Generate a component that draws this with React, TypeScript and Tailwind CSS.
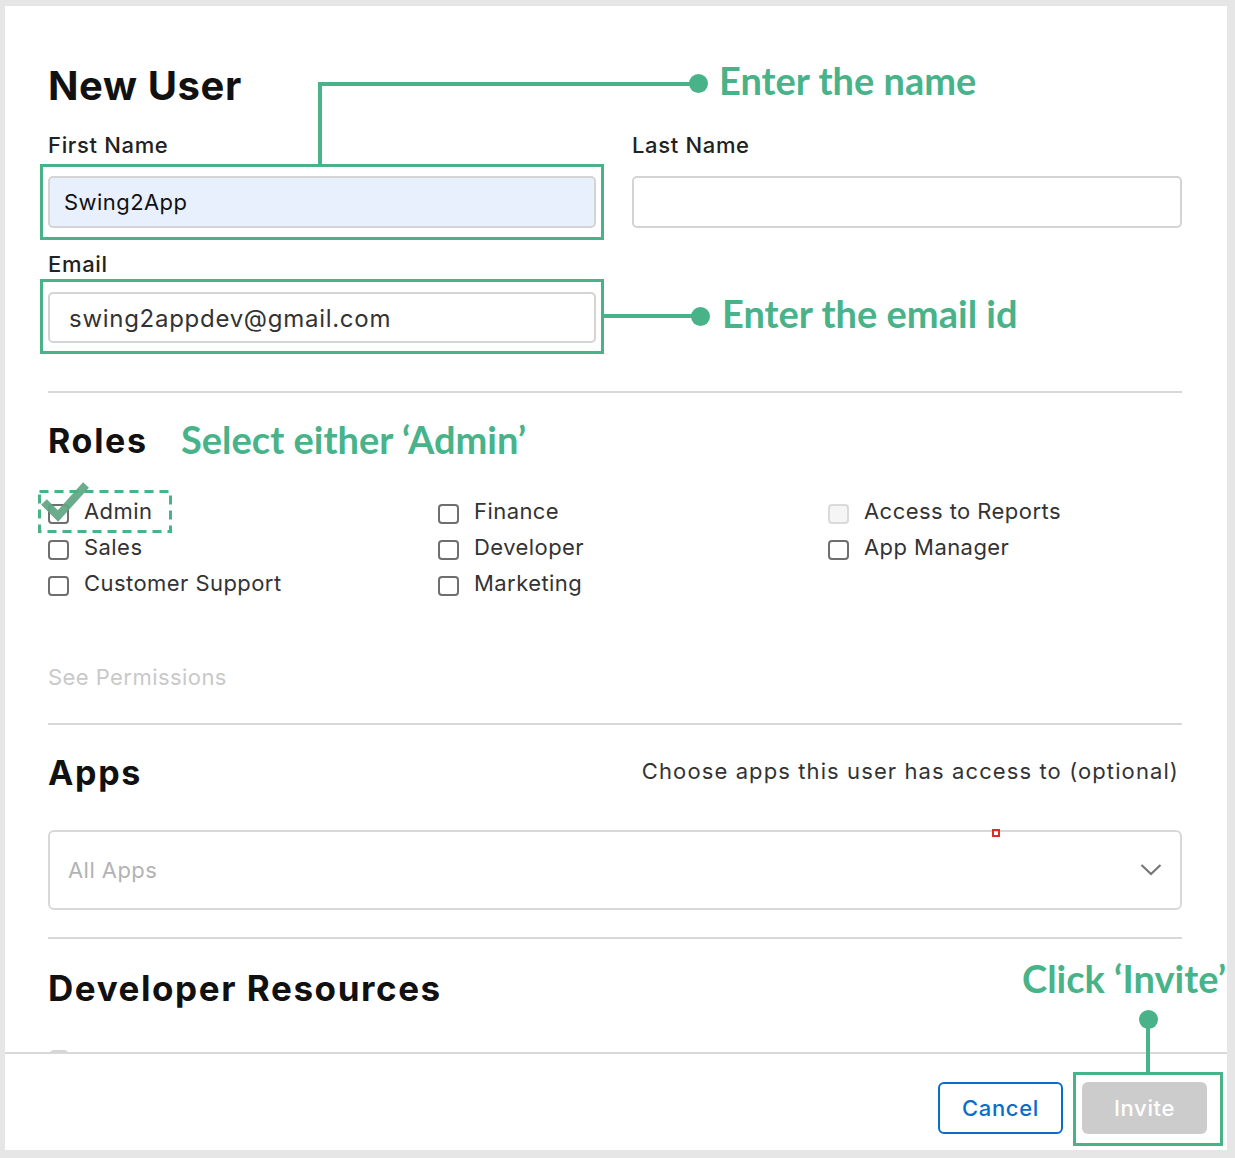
import React from "react";

function Box({ disabled }: { disabled?: boolean }) {
  return (
    <span
      className={
        disabled
          ? "mt-[11px] block h-[20px] w-[21px] shrink-0 rounded-[4px] border-2 border-[#dadada] bg-[#f5f5f5]"
          : "mt-[11px] block h-[20px] w-[21px] shrink-0 rounded-[4px] border-2 border-[#6f6f6f] bg-white"
      }
    />
  );
}

function Check({ label, disabled }: { label: string; disabled?: boolean }) {
  return (
    <div className="flex h-[36px] items-start gap-[15px]">
      <Box disabled={disabled} />
      <span className="text-[22px] leading-[36px] tracking-[0.02em] text-[#333]">{label}</span>
    </div>
  );
}

export default function App() {
  return (
    <div className="relative h-[1158px] w-[1235px] overflow-hidden bg-[#e6e6e6] pb-[8px] pl-[5px] pr-[8px] pt-[6px] font-[Inter,sans-serif]">
      <div className="flex h-full flex-col bg-white">
        <div className="h-[1046px] overflow-hidden pl-[43px] pr-[45px] pt-[56px]">
          <h1 className="text-[40px] font-bold leading-[48px] tracking-[0.015em] text-[#111]">New User</h1>

          <div className="mt-[21px] grid grid-cols-[548px_550px] gap-x-[36px]">
            <div>
              <div className="text-[22px] font-medium leading-[28px] tracking-[0.03em] text-[#222]">First Name</div>
              <div className="mt-[17px] flex h-[52px] items-center rounded-[5px] border-2 border-[#d4d4d4] bg-[#e8f0fe] pl-[14px] text-[22px] tracking-[0.02em] text-[#111]">
                Swing2App
              </div>
            </div>
            <div>
              <div className="text-[22px] font-medium leading-[28px] tracking-[0.03em] text-[#222]">Last Name</div>
              <div className="mt-[17px] h-[52px] rounded-[5px] border-2 border-[#d4d4d4] bg-white" />
            </div>
          </div>

          <div className="mt-[22px] text-[22px] font-medium leading-[28px] tracking-[0.03em] text-[#222]">Email</div>
          <div className="mt-[14px] flex h-[51px] w-[548px] items-center rounded-[5px] border-2 border-[#d4d4d4] bg-white pl-[19px] pt-[2px] text-[24px] tracking-[0.03em] text-[#333]">
            swing2appdev@gmail.com
          </div>

          <div className="mt-[48px] h-[2px] bg-[#d8d8d8]" />

          <h2 className="mt-[28px] text-[34px] font-bold leading-[40px] tracking-[0.05em] text-[#111]">Roles</h2>

          <div className="mt-[32px] grid grid-flow-col grid-cols-[390px_390px_1fr] grid-rows-3">
            <Check label="Admin" />
            <Check label="Sales" />
            <Check label="Customer Support" />
            <Check label="Finance" />
            <Check label="Developer" />
            <Check label="Marketing" />
            <Check label="Access to Reports" disabled />
            <Check label="App Manager" />
          </div>

          <div className="mt-[62px] text-[22px] leading-[28px] tracking-[0.02em] text-[#c9c9c9]">See Permissions</div>

          <div className="mt-[32px] h-[2px] bg-[#d8d8d8]" />

          <div className="mt-[28px] flex items-start justify-between">
            <h2 className="text-[34px] font-bold leading-[40px] tracking-[0.05em] text-[#111]">Apps</h2>
            <span className="mr-[3px] mt-[4px] text-[22px] leading-[28px] tracking-[0.05em] text-[#333]">
              Choose apps this user has access to (optional)
            </span>
          </div>

          <div className="mt-[37px] flex h-[80px] items-center justify-between rounded-[6px] border-2 border-[#d8d8d8] pl-[18px] pr-[18px]">
            <span className="text-[22px] tracking-[0.02em] text-[#b3b3b3]">All Apps</span>
            <svg width="22" height="14" viewBox="0 0 22 14" fill="none">
              <polyline points="1.5,2 11,11 20.5,2" stroke="#777" strokeWidth="2.2" />
            </svg>
          </div>

          <div className="mt-[27px] h-[2px] bg-[#d8d8d8]" />

          <h2 className="mt-[27px] text-[35px] font-bold leading-[44px] tracking-[0.045em] text-[#111]">Developer Resources</h2>

          <div className="mt-[40px] flex">
            <span className="ml-[1px] block h-[20px] w-[20px] rounded-[5px] border-2 border-[#d6d6d6] bg-[#eee]" />
          </div>
        </div>

        <div className="flex flex-1 items-start justify-end gap-[19px] border-t-2 border-[#d8d8d8] pr-[20px] pt-[28px]">
          <button className="flex h-[52px] w-[125px] items-center justify-center rounded-[6px] border-2 border-[#0a6dcc] bg-white text-[22px] font-medium tracking-[0.03em] text-[#0a6dcc]">
            Cancel
          </button>
          <button className="flex h-[52px] w-[125px] items-center justify-center rounded-[6px] bg-[#cccccc] text-[22px] font-medium tracking-[0.03em] text-white">
            Invite
          </button>
        </div>
      </div>

      {/* annotations */}
      <div className="absolute left-[40px] top-[164px] h-[76px] w-[564px] border-[3px] border-[#48b389]" />
      <div className="absolute left-[318px] top-[82px] h-[83px] w-[4px] bg-[#48b389]" />
      <div className="absolute left-[318px] top-[82px] h-[4px] w-[380px] bg-[#48b389]" />
      <div className="absolute left-[689px] top-[74px] h-[19px] w-[19px] rounded-full bg-[#48b389]" />
      <div className="absolute left-[719px] top-[61px] font-[Lato,sans-serif] text-[38px] font-bold leading-none text-[#48b389]">
        Enter the name
      </div>

      <div className="absolute left-[40px] top-[279px] h-[75px] w-[564px] border-[3px] border-[#48b389]" />
      <div className="absolute left-[604px] top-[314px] h-[4px] w-[96px] bg-[#48b389]" />
      <div className="absolute left-[691px] top-[307px] h-[19px] w-[19px] rounded-full bg-[#48b389]" />
      <div className="absolute left-[722px] top-[294px] font-[Lato,sans-serif] text-[38px] font-bold leading-none text-[#48b389]">
        Enter the email id
      </div>

      <div className="absolute left-[181px] top-[420px] font-[Lato,sans-serif] text-[38px] font-bold leading-none text-[#48b389]">
        Select either ‘Admin’
      </div>
      <svg className="absolute left-[37px] top-[489px]" width="136" height="45" viewBox="0 0 136 45" fill="none">
        <rect x="2.5" y="2.5" width="131" height="40" stroke="#48b389" strokeWidth="3" strokeDasharray="9 6" />
      </svg>
      <svg className="absolute left-[38px] top-[478px]" width="54" height="46" viewBox="0 0 54 46" fill="none">
        <polyline points="6,24 20,38 48,7" stroke="#5ea583" strokeWidth="8" strokeOpacity="0.92" />
      </svg>

      <div className="absolute left-[992px] top-[829px] h-[8px] w-[8px] border-2 border-[#e5262d]" />

      <div className="absolute left-[1022px] top-[959px] font-[Lato,sans-serif] text-[38px] font-bold leading-none text-[#48b389]">
        Click ‘Invite’
      </div>
      <div className="absolute left-[1139px] top-[1010px] h-[19px] w-[19px] rounded-full bg-[#48b389]" />
      <div className="absolute left-[1146px] top-[1019px] h-[54px] w-[4px] bg-[#48b389]" />
      <div className="absolute left-[1073px] top-[1072px] h-[74px] w-[150px] border-[3px] border-[#48b389]" />
    </div>
  );
}
